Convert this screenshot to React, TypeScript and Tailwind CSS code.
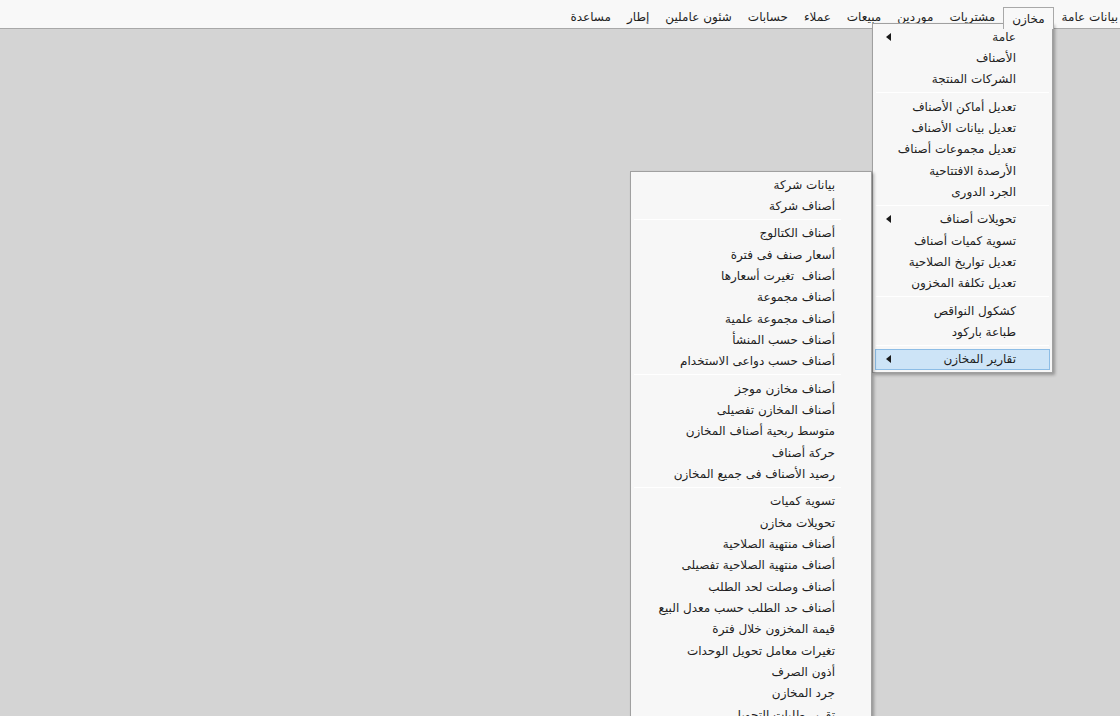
import React from 'react';

type Item = { label: string; sub?: boolean; active?: boolean } | 'sep';

const topMenu = [
  'بيانات عامة',
  'مخازن',
  'مشتريات',
  'موردين',
  'مبيعات',
  'عملاء',
  'حسابات',
  'شئون عاملين',
  'إطار',
  'مساعدة',
];

const storesMenu: Item[] = [
  { label: 'عامة', sub: true },
  { label: 'الأصناف' },
  { label: 'الشركات المنتجة' },
  'sep',
  { label: 'تعديل أماكن الأصناف' },
  { label: 'تعديل بيانات الأصناف' },
  { label: 'تعديل مجموعات أصناف' },
  { label: 'الأرصدة الافتتاحية' },
  { label: 'الجرد الدورى' },
  'sep',
  { label: 'تحويلات أصناف', sub: true },
  { label: 'تسوية كميات أصناف' },
  { label: 'تعديل تواريخ الصلاحية' },
  { label: 'تعديل تكلفة المخزون' },
  'sep',
  { label: 'كشكول النواقص' },
  { label: 'طباعة باركود' },
  'sep',
  { label: 'تقارير المخازن', sub: true, active: true },
];

const reportsMenu: Item[] = [
  { label: 'بيانات شركة' },
  { label: 'أصناف شركة' },
  'sep',
  { label: 'أصناف الكتالوج' },
  { label: 'أسعار صنف فى فترة' },
  { label: 'أصناف  تغيرت أسعارها' },
  { label: 'أصناف مجموعة' },
  { label: 'أصناف مجموعة علمية' },
  { label: 'أصناف حسب المنشأ' },
  { label: 'أصناف حسب دواعى الاستخدام' },
  'sep',
  { label: 'أصناف مخازن موجز' },
  { label: 'أصناف المخازن تفصيلى' },
  { label: 'متوسط ربحية أصناف المخازن' },
  { label: 'حركة أصناف' },
  { label: 'رصيد الأصناف فى جميع المخازن' },
  'sep',
  { label: 'تسوية كميات' },
  { label: 'تحويلات مخازن' },
  { label: 'أصناف منتهية الصلاحية' },
  { label: 'أصناف منتهية الصلاحية تفصيلى' },
  { label: 'أصناف وصلت لحد الطلب' },
  { label: 'أصناف حد الطلب حسب معدل البيع' },
  { label: 'قيمة المخزون خلال فترة' },
  { label: 'تغيرات معامل تحويل الوحدات' },
  { label: 'أذون الصرف' },
  { label: 'جرد المخازن' },
  { label: 'تقرير طلبات التحويل' },
];

function Arrow() {
  return (
    <svg width="5" height="8" viewBox="0 0 5 8" className="shrink-0">
      <path d="M5 0 L0 4 L5 8 Z" fill="#1a1a1a" />
    </svg>
  );
}

function MenuList({ items, textPad, sepClass }: { items: Item[]; textPad: string; sepClass: string }) {
  return (
    <div className="flex flex-col py-[2px]">
      {items.map((it, i) =>
        it === 'sep' ? (
          <div key={i} className={`h-[6px] flex items-center ${sepClass}`}>
            <div className="w-full h-px bg-[#d5d5d5] border-b border-white" />
          </div>
        ) : (
          <div
            key={i}
            className={`h-[21.33px] mx-[2px] flex items-center justify-between ${textPad} pl-[10px] ${
              it.active ? 'bg-[#cde4f7] border border-[#8dbde6]' : 'border border-transparent'
            }`}
          >
            <span className="whitespace-pre">{it.label}</span>
            {it.sub ? <Arrow /> : <span />}
          </div>
        )
      )}
    </div>
  );
}

export default function App() {
  return (
    <div
      className="relative w-[1120px] h-[716px] overflow-hidden bg-[#d4d4d4] text-[12px] text-[#1e1e1e]"
      style={{ fontFamily: '"DejaVu Sans", "Noto Sans", sans-serif' }}
    >
      <div dir="rtl" className="h-[29px] bg-[#f8f8f8] border-b border-[#a8a8a8] flex items-end">
        {topMenu.map((m, i) => (
          <div
            key={m}
            className={`h-[22px] flex items-center ${i === 0 ? 'pr-[2px] pl-[8px]' : 'px-[8px]'} ${
              m === 'مخازن' ? 'bg-[#f8f8f8] border border-b-0 border-[#a8a8a8] relative z-10 mb-[-1px]' : ''
            }`}
          >
            {m}
          </div>
        ))}
      </div>

      <div
        dir="rtl"
        className="absolute left-[872px] top-[23px] w-[181px] bg-[#f7f7f7] border border-[#a0a0a0] shadow-[2px_2px_3px_rgba(0,0,0,0.3)]"
      >
        <MenuList items={storesMenu} textPad="pr-[33px]" sepClass="pr-[3px] pl-[3px]" />
      </div>

      <div
        dir="rtl"
        className="absolute left-[630px] top-[171px] w-[242px] bg-[#f7f7f7] border border-[#a0a0a0] shadow-[2px_2px_3px_rgba(0,0,0,0.3)]"
      >
        <MenuList items={reportsMenu} textPad="pr-[33px]" sepClass="pr-[30px] pl-[3px]" />
      </div>
    </div>
  );
}
